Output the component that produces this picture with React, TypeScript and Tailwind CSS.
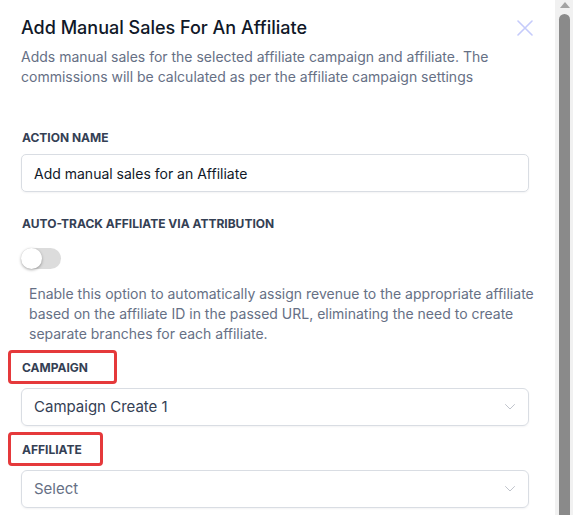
import React from "react";

function Chevron() {
  return (
    <svg width="12" height="8" viewBox="0 0 12 8" fill="none">
      <path d="M1.5 1.5L6 6L10.5 1.5" stroke="#c0c4cc" strokeWidth="1" strokeLinecap="round" strokeLinejoin="round" />
    </svg>
  );
}

function Label({ children, boxed, boxW }: { children: React.ReactNode; boxed?: boolean; boxW?: string }) {
  return (
    <div className="relative">
      <div className="text-[12px] font-bold uppercase leading-[16px] text-[#344054] pl-px">{children}</div>
      {boxed && (
        <div className={`absolute -left-[13px] -top-[10px] h-[34px] rounded-[4px] border-[3px] border-[#e5393b] ${boxW}`} />
      )}
    </div>
  );
}

export default function App() {
  return (
    <div className="w-[573px] h-[515px] flex bg-white overflow-hidden" style={{ fontFamily: "Inter, 'Noto Sans', sans-serif" }}>
      <div className="flex-1 pl-[21px] pr-[26px] flex flex-col">
        <div className="flex items-start justify-between pt-[16px] -mr-[4px]">
          <div className="text-[18px] leading-[24px] font-medium text-[#101828]">Add Manual Sales For An Affiliate</div>
          <svg width="16" height="16" viewBox="0 0 16 16" className="mt-[4px]">
            <path d="M1 1L15 15M15 1L1 15" stroke="#c5cbfb" strokeWidth="1.6" strokeLinecap="round" />
          </svg>
        </div>
        <p className="mt-[7px] text-[14px] leading-[20px] text-[#667085]">
          Adds manual sales for the selected affiliate campaign and affiliate. The commissions will be calculated as per the affiliate campaign settings
        </p>

        <div className="mt-[43px]">
          <Label>Action Name</Label>
        </div>
        <div className="mt-[8px] h-[38px] rounded-[5px] border border-[#d9dde3] shadow-[0_1px_2px_rgba(16,24,40,0.05)] flex items-center px-[12px] text-[14px] text-[#101828]">
          Add manual sales for an Affiliate
        </div>

        <div className="mt-[24px]">
          <Label>Auto-track affiliate via attribution</Label>
        </div>
        <div className="mt-[16px] w-[40px] h-[21px] rounded-full bg-[#dcdcdc] relative">
          <div className="absolute left-0 top-0 w-[21px] h-[21px] rounded-full bg-white shadow-[0_1px_3px_rgba(0,0,0,0.35)]" />
        </div>
        <p className="mt-[15px] pl-[8px] -mr-[16px] text-[14px] leading-[20px] text-[#667085]">
          Enable this option to automatically assign revenue to the appropriate affiliate based on the affiliate ID in the passed URL, eliminating the need to create separate branches for each affiliate.
        </p>

        <div className="mt-[16px]">
          <Label boxed boxW="w-[109px]">Campaign</Label>
        </div>
        <div className="mt-[12px] h-[38px] rounded-[6px] border border-[#d9dde3] shadow-[0_1px_2px_rgba(16,24,40,0.05)] flex items-center justify-between pl-[12px] pr-[12px] text-[15px] text-[#344054]">
          <span>Campaign Create 1</span>
          <Chevron />
        </div>

        <div className="mt-[16px]">
          <Label boxed boxW="w-[95px]">Affiliate</Label>
        </div>
        <div className="mt-[12px] h-[38px] rounded-[6px] border border-[#d9dde3] shadow-[0_1px_2px_rgba(16,24,40,0.05)] flex items-center justify-between pl-[12px] pr-[12px] text-[15px] text-[#667085]">
          <span>Select</span>
          <Chevron />
        </div>
      </div>

      <div className="w-[18px] h-full bg-[#f1f1f1] flex flex-col items-center pt-[2px] pl-[1px]">
        <svg width="10" height="6" viewBox="0 0 10 6">
          <path d="M5 0L10 6H0Z" fill="#a3a3a3" />
        </svg>
        <div className="mt-[6px] w-[11px] flex-1 rounded-t-full bg-[#8a8a8a]" />
      </div>
    </div>
  );
}
